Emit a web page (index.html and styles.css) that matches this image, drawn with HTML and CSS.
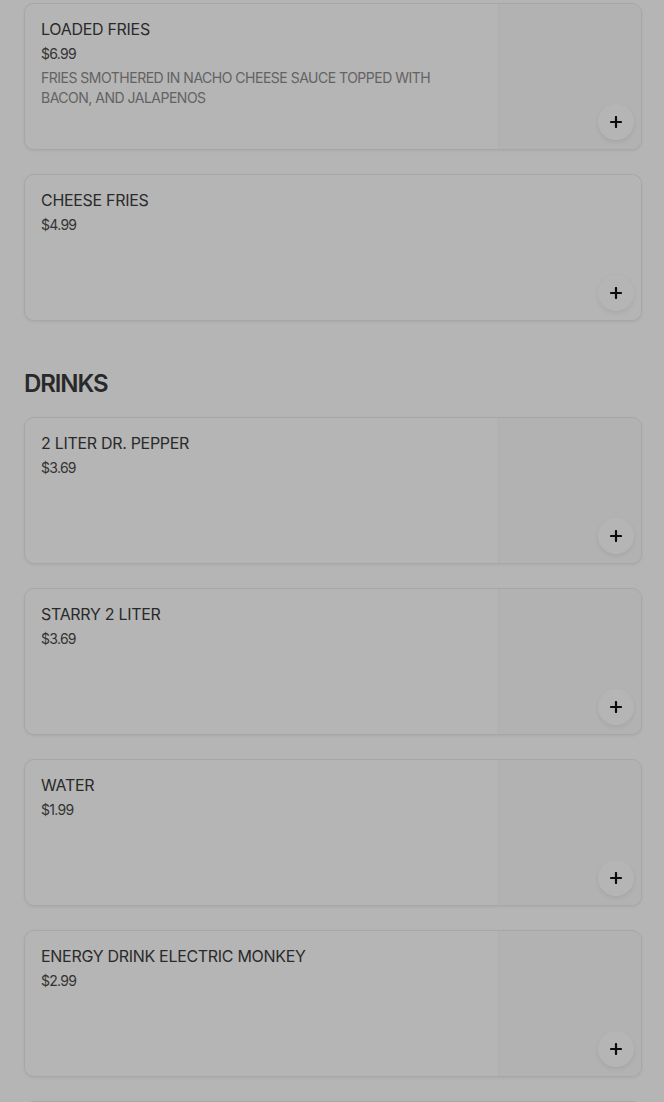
FILE: index.html
```html
<!DOCTYPE html>
<html>
<head>
<meta charset="utf-8">
<link rel="stylesheet" href="styles.css">
</head>
<body>
<main class="menu">
  <section class="section">
    <div class="items">
      <div class="card">
        <div class="info">
          <div class="title">LOADED FRIES</div>
          <div class="price">$6.99</div>
          <div class="desc">FRIES SMOTHERED IN NACHO CHEESE SAUCE TOPPED WITH BACON, AND JALAPENOS</div>
        </div>
        <div class="thumb"><button class="add"><svg viewBox="0 0 12 12" width="12" height="12"><path d="M6 1v10M1 6h10" stroke="#111" stroke-width="2.2" stroke-linecap="round"/></svg></button></div>
      </div>
      <div class="card">
        <div class="info">
          <div class="title">CHEESE FRIES</div>
          <div class="price">$4.99</div>
        </div>
        <div class="thumb plain"><button class="add"><svg viewBox="0 0 12 12" width="12" height="12"><path d="M6 1v10M1 6h10" stroke="#111" stroke-width="2.2" stroke-linecap="round"/></svg></button></div>
      </div>
    </div>
  </section>
  <section class="section">
    <h2 class="heading">DRINKS</h2>
    <div class="items">
      <div class="card">
        <div class="info">
          <div class="title">2 LITER DR. PEPPER</div>
          <div class="price">$3.69</div>
        </div>
        <div class="thumb"><button class="add"><svg viewBox="0 0 12 12" width="12" height="12"><path d="M6 1v10M1 6h10" stroke="#111" stroke-width="2.2" stroke-linecap="round"/></svg></button></div>
      </div>
      <div class="card">
        <div class="info">
          <div class="title">STARRY 2 LITER</div>
          <div class="price">$3.69</div>
        </div>
        <div class="thumb"><button class="add"><svg viewBox="0 0 12 12" width="12" height="12"><path d="M6 1v10M1 6h10" stroke="#111" stroke-width="2.2" stroke-linecap="round"/></svg></button></div>
      </div>
      <div class="card">
        <div class="info">
          <div class="title">WATER</div>
          <div class="price">$1.99</div>
        </div>
        <div class="thumb"><button class="add"><svg viewBox="0 0 12 12" width="12" height="12"><path d="M6 1v10M1 6h10" stroke="#111" stroke-width="2.2" stroke-linecap="round"/></svg></button></div>
      </div>
      <div class="card">
        <div class="info">
          <div class="title">ENERGY DRINK ELECTRIC MONKEY</div>
          <div class="price">$2.99</div>
        </div>
        <div class="thumb"><button class="add"><svg viewBox="0 0 12 12" width="12" height="12"><path d="M6 1v10M1 6h10" stroke="#111" stroke-width="2.2" stroke-linecap="round"/></svg></button></div>
      </div>
      <div class="card">
        <div class="info"></div>
        <div class="thumb"></div>
      </div>
    </div>
  </section>
</main>
<div class="overlay"></div>
</body>
</html>
```
FILE: styles.css
```css
html, body {
  margin: 0;
  padding: 0;
  background: #fff;
  font-family: Inter, "Liberation Sans", sans-serif;
  color: #333;
  overflow: hidden;
}
.menu {
  padding: 3px 22px 0 24px;
  display: flex;
  flex-direction: column;
  gap: 47px;
}
.section {
  display: flex;
  flex-direction: column;
  gap: 17px;
}
.heading {
  margin: 0;
  font-size: 24px;
  line-height: 32px;
  font-weight: 600;
  letter-spacing: -1.1px;
  color: #3a3a3a;
}
.items {
  display: flex;
  flex-direction: column;
  gap: 24px;
}
.card {
  display: flex;
  height: 147px;
  box-sizing: border-box;
  border: 1px solid #ebebeb;
  border-radius: 10px;
  background: #fff;
  box-shadow: 0 1px 3px rgba(0,0,0,0.07);
  overflow: hidden;
}
.info {
  flex: 1;
  padding: 15px 30px 16px 16px;
  display: flex;
  flex-direction: column;
  gap: 4px;
  min-width: 0;
}
.title {
  font-size: 16px;
  line-height: 20px;
  color: #3c3c3c;
  letter-spacing: -0.3px;
  margin-bottom: 1px;
}
.price {
  font-size: 14px;
  line-height: 20px;
  color: #4a4a4a;
  letter-spacing: -0.7px;
}
.desc {
  font-size: 14px;
  line-height: 20px;
  color: #8c8c8c;
  letter-spacing: -0.5px;
}
.thumb {
  width: 143px;
  flex: none;
  background: #fbfbfb;
  border-left: 1px solid #f5f5f5;
  display: flex;
  align-items: flex-end;
  justify-content: flex-end;
  padding: 0 7px 9px 0;
  box-sizing: border-box;
}
.thumb.plain {
  background: #fff;
  border-left: none;
}
.add {
  width: 36px;
  height: 36px;
  border-radius: 50%;
  border: none;
  background: #fff;
  box-shadow: 0 2px 5px rgba(0,0,0,0.08);
  display: flex;
  align-items: center;
  justify-content: center;
  padding: 0;
}
.overlay {
  position: fixed;
  inset: 0;
  background: rgba(0,0,0,0.29);
}
```
